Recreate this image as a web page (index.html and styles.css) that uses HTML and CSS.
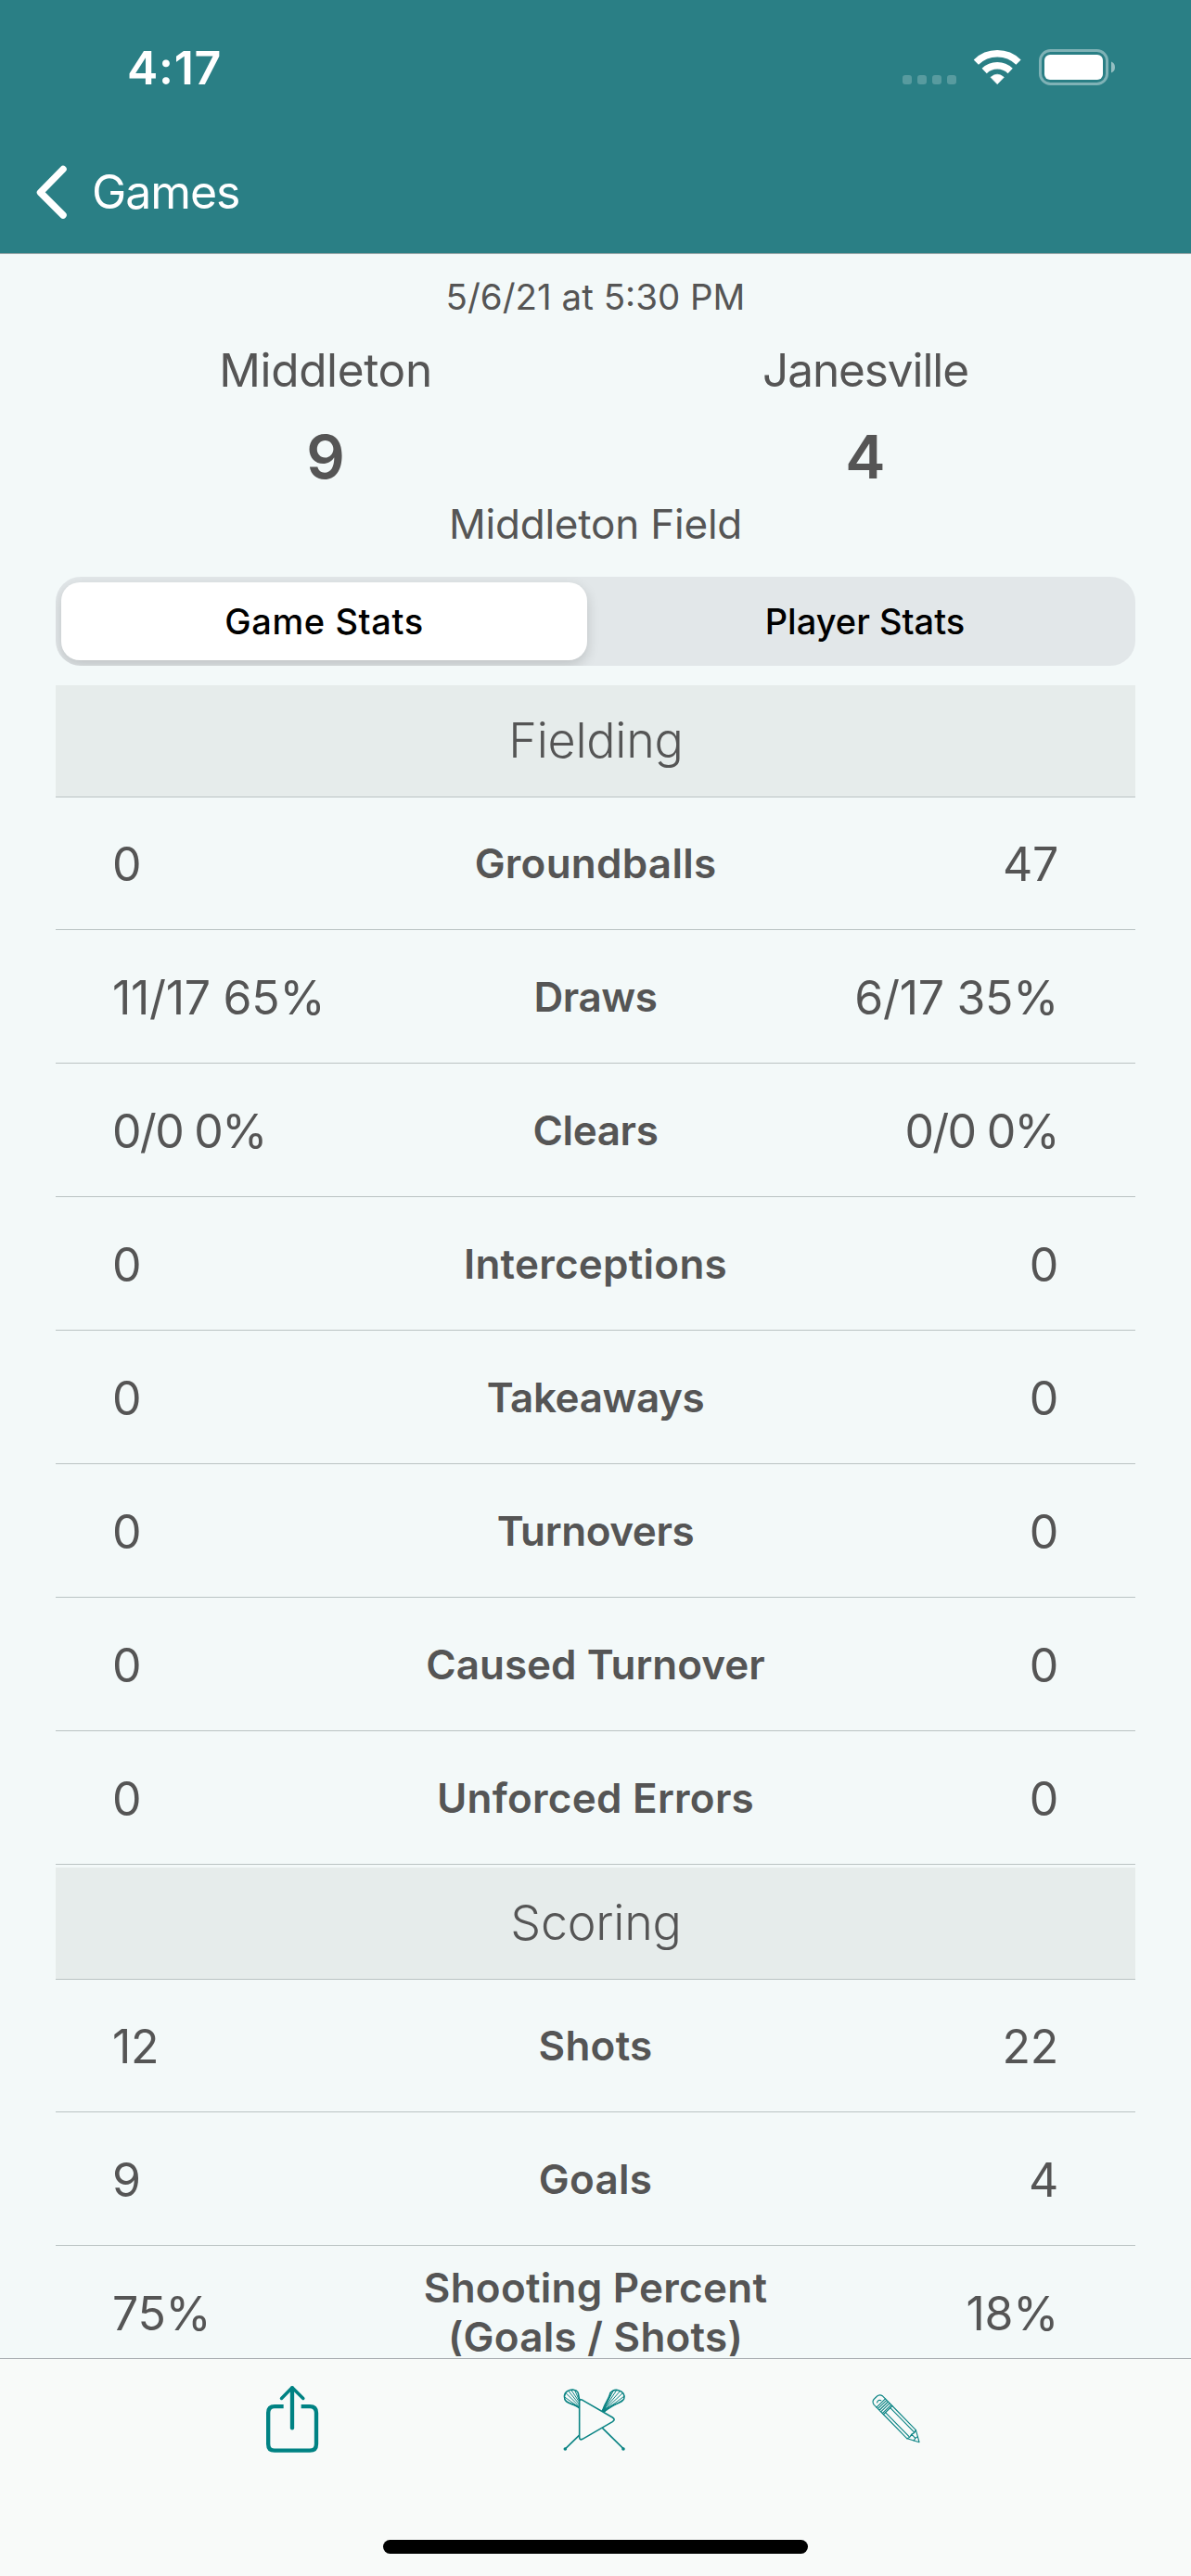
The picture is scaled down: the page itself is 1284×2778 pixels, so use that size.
FILE: index.html
```html
<!DOCTYPE html>
<html lang="en">
<head>
<meta charset="utf-8">
<title>Game Stats</title>
<link rel="stylesheet" href="styles.css">
</head>
<body>
<header class="header">
  <div class="status">
    <span class="status-time">4:17</span>
    <div class="status-icons">
      <div class="signal"><i></i><i></i><i></i><i></i></div>
      <svg class="wifi" viewBox="325 66 162 120" width="54" height="40" fill="none" stroke="#fff" stroke-width="22.5">
        <path d="M338 111.500A98 98 0 0 1 475 111.500"/>
        <path d="M364.500 139.500A60 60 0 0 1 448.500 139.500"/>
        <path d="M385 160Q406.500 141 428 160L406.500 182Z" fill="#fff" stroke-width="2" stroke-linejoin="round"/>
      </svg>
      <svg class="battery" viewBox="0 0 84 40" width="84" height="40">
        <rect x="1.500" y="1.500" width="72" height="36" rx="11" fill="none" stroke="#fff" stroke-opacity=".4" stroke-width="3"/>
        <rect x="6" y="6" width="63" height="27" rx="6" fill="#fff"/>
        <path d="M78 13.500Q82 15 82 19.500T78 25.500Z" fill="#fff" fill-opacity=".5"/>
      </svg>
    </div>
  </div>
  <nav class="nav">
    <svg class="chevron" viewBox="0 0 36 60" width="36" height="60" fill="none" stroke="#fff" stroke-width="7.500" stroke-linecap="round" stroke-linejoin="round"><path d="M30 5.500L5.500 30.500L30 55"/></svg>
    <a class="nav-back">Games</a>
  </nav>
</header>

<main class="content">
  <section class="score">
    <div class="date">5/6/21 at 5:30 PM</div>
    <div class="teams">
      <div class="team"><div class="team-name">Middleton</div><div class="team-score">9</div></div>
      <div class="team"><div class="team-name team-name-away">Janesville</div><div class="team-score">4</div></div>
    </div>
    <div class="field">Middleton Field</div>
  </section>

  <div class="tabs">
    <div class="tab tab-active">Game Stats</div>
    <div class="tab">Player Stats</div>
  </div>

  <section class="group">
    <h2 class="group-title">Fielding</h2>
    <div class="row"><span class="home">0</span><span class="label">Groundballs</span><span class="away">47</span></div>
    <div class="row"><span class="home">11/17 65%</span><span class="label snug">Draws</span><span class="away">6/17 35%</span></div>
    <div class="row"><span class="home tight">0/0 0%</span><span class="label snug">Clears</span><span class="away tight">0/0 0%</span></div>
    <div class="row"><span class="home">0</span><span class="label">Interceptions</span><span class="away">0</span></div>
    <div class="row"><span class="home">0</span><span class="label snug">Takeaways</span><span class="away">0</span></div>
    <div class="row"><span class="home">0</span><span class="label snug">Turnovers</span><span class="away">0</span></div>
    <div class="row"><span class="home">0</span><span class="label long">Caused Turnover</span><span class="away">0</span></div>
    <div class="row"><span class="home">0</span><span class="label">Unforced Errors</span><span class="away">0</span></div>
  </section>
  <section class="group">
    <h2 class="group-title">Scoring</h2>
    <div class="row"><span class="home">12</span><span class="label">Shots</span><span class="away">22</span></div>
    <div class="row"><span class="home">9</span><span class="label">Goals</span><span class="away">4</span></div>
    <div class="row"><span class="home">75%</span><span class="label">Shooting Percent<br>(Goals / Shots)</span><span class="away">18%</span></div>
  </section>
</main>

<footer class="toolbar">
  <div class="tools">
    <svg class="tool" viewBox="135 90 180 228" width="60" height="76" fill="none" stroke="#008283" stroke-width="13">
      <path d="M197 162.500H168Q147.500 162.500 147.500 183V284Q147.500 305 168 305H282Q303 305 303 284V183Q303 162.500 282 162.500H254"/>
      <path d="M225 103V232" stroke-linecap="round"/>
      <path d="M190.500 136.500L225 101.500L260.500 136.500" stroke-width="10.500" stroke-linecap="round" stroke-linejoin="round"/>
    </svg>
    <svg class="tool" viewBox="76 70 210 210" width="70" height="70" fill="none" stroke="#0b8484" stroke-width="4.800" stroke-linecap="round" stroke-linejoin="round">
      <path d="M132 139C124 126 101 128 90 118C80 108 81 92 93 84C106 77 122 78 127 88C130 95 129 104 133 113"/>
      <path stroke-width="3" d="M132 137L84 103M132 133L89 91M132 127L97 84M132 120L106 81M132 115L117 81M132 139L88 115"/>
      <path d="M207 150C209 130 226 112 230 96C233 84 245 78 258 81C273 84 280 97 276 109C269 125 243 124 226 138L212 151Z"/>
      <path stroke-width="3" d="M208 148L242 82M208 148L252 81M208 148L263 84M209 149L271 91M210 150L276 101M211 151L271 113M208 146L232 96"/>
      <path stroke-width="8" d="M208 147L215 139"/>
      <path d="M131 227L87 270M207 204L274 270"/>
      <path d="M132 119Q132 108 142 113L239 169Q250 176 239 183L142 239Q132 244 132 233Z" fill="#f8faf9"/>
      <g fill="#0b8484" stroke="none"><circle cx="86" cy="271" r="5.500"/><circle cx="274" cy="271" r="5.500"/></g>
    </svg>
    <svg class="tool" viewBox="80 90 175 175" width="58" height="58" fill="none" stroke="#0b8484" stroke-width="3.400" stroke-linejoin="round" stroke-linecap="round">
      <g transform="translate(243 252) rotate(45.600)">
        <path d="M0 0L-36 -20H-146V20H-36Z"/>
        <path d="M-36 -20Q-31 -10 -36 0Q-31 10 -36 20M-16 -9Q-20 0 -16 9M-36 0L-18 0"/>
        <path d="M-36 -11H-146M-36 11H-146"/>
        <path d="M-146 -20H-178M-146 20H-178M-151 -20V20M-158 -20V20M-165 -20V20M-172 -20V20M-178 -20V20"/>
        <path d="M-178 -20H-190Q-203 -18 -203 -6V6Q-203 18 -190 20H-178M-184 -6Q-193 -3 -188 8"/>
      </g>
    </svg>
  </div>
  <div class="home-indicator"></div>
</footer>
</body>
</html>
```
FILE: styles.css
```css
* { box-sizing: border-box; }

body {
  margin: 0;
  width: 1284px;
  height: 2778px;
  display: flex;
  flex-direction: column;
  overflow: hidden;
  background: #f3f9f9;
  color: #555;
  font-family: "Inter", "Liberation Sans", sans-serif;
}

svg { display: block; }

/* Header */
.header {
  flex: none;
  height: 274px;
  background: #2a7f85;
  border-bottom: 1px solid #9fa9ab;
  color: #fff;
}
.status {
  display: flex;
  justify-content: space-between;
  height: 146px;
  padding: 0 80px 0 137px;
}
.status-time {
  font-size: 50px;
  font-weight: 600;
  line-height: 146px;
  letter-spacing: 0.7px;
}
.status-icons {
  display: flex;
  align-items: flex-start;
  padding-top: 52px;
}
.signal {
  display: flex;
  gap: 6px;
  padding-top: 29px;
}
.signal i {
  width: 10px;
  height: 10px;
  border-radius: 3px;
  background: rgba(255, 255, 255, 0.22);
}
.wifi { margin-left: 17px; }
.battery { margin: 1px 0 0 18px; }
.nav {
  display: flex;
  align-items: center;
  height: 122px;
  padding-left: 38px;
}
.nav-back {
  margin-left: 25px;
  font-size: 50px;
  letter-spacing: -1.08px;
}

/* Scoreboard */
.content {
  flex: 1;
  min-height: 0;
  margin-bottom: 2px;
  padding: 16px 60px 0;
  overflow: hidden;
}
.score { text-align: center; }
.date {
  font-size: 38.5px;
  line-height: 60px;
}
.teams {
  display: grid;
  grid-template-columns: 1fr 1fr;
  margin-top: 19px;
}
.team-name {
  font-size: 49.5px;
  line-height: 60px;
  letter-spacing: -0.36px;
}
.team-name-away { letter-spacing: -1.1px; }
.team-score {
  margin-top: 24px;
  font-size: 65px;
  font-weight: 600;
  line-height: 80px;
}
.field {
  margin-top: 7px;
  font-size: 44px;
  line-height: 50px;
  letter-spacing: -0.2px;
}

/* Segmented control */
.tabs {
  display: grid;
  grid-template-columns: 567px 1fr;
  gap: 14px;
  height: 96px;
  margin-top: 32px;
  padding: 6px;
  overflow: hidden;
  border-radius: 27px;
  background: #e2e7e9;
}
.tab {
  border-radius: 20px;
  color: #000;
  font-size: 38px;
  font-weight: 500;
  line-height: 84px;
  letter-spacing: 0;
  text-align: center;
}
.tab-active {
  background: #fff;
  box-shadow: 0 5px 14px rgba(0, 0, 0, 0.16);
  letter-spacing: 0.6px;
}

/* Stat tables */
.group { margin-top: 21px; }
.group + .group { margin-top: 3px; }
.group-title {
  height: 121px;
  margin: 0;
  border-bottom: 1px solid #bac3c3;
  background: #e6eceb;
  font-size: 52px;
  font-weight: 300;
  line-height: 120px;
  letter-spacing: -0.25px;
  text-align: center;
  text-indent: 1px;
}
.row {
  display: grid;
  grid-template-columns: 1fr auto 1fr;
  align-items: center;
  height: 144px;
  padding: 0 61px;
  border-bottom: 1px solid #bac3c3;
}
.group-title + .row { height: 143px; }
.home,
.away {
  padding-top: 2px;
  font-size: 50px;
  line-height: 60px;
  letter-spacing: -0.3px;
}
.home.tight,
.away.tight { letter-spacing: -1.7px; }
.away {
  padding-right: 22px;
  text-align: right;
}
.label {
  padding-top: 1px;
  font-size: 44px;
  font-weight: 600;
  line-height: 53px;
  letter-spacing: 0.25px;
  text-align: center;
}
.long { letter-spacing: 0; }
.snug { letter-spacing: -0.4px; }

/* Toolbar */
.toolbar {
  flex: none;
  display: flex;
  flex-direction: column;
  align-items: center;
  justify-content: space-between;
  height: 235px;
  padding-bottom: 24px;
  border-top: 1px solid #a7acb0;
  background: #f8faf9;
}
.tools {
  display: flex;
  align-items: center;
  justify-content: space-between;
  width: 710px;
  height: 129px;
  margin-right: 4px;
}
.home-indicator {
  width: 458px;
  height: 15px;
  border-radius: 8px;
  background: #000;
}
```
